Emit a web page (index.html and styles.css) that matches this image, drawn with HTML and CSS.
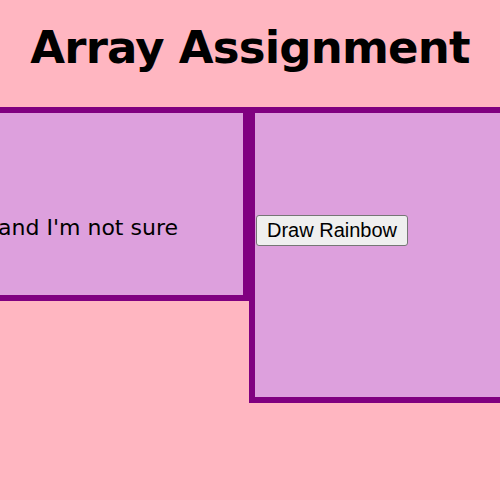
FILE: index.html
```html
<!DOCTYPE html>
<html>
<head>
<meta charset="utf-8">
<link rel="stylesheet" href="styles.css">
</head>
<body>
<h1 class="title">Array Assignment</h1>
<div class="row">
  <div class="panel panel-left">
    <p class="note">I have tried a lot of things and I'm not sure</p>
  </div>
  <div class="panel panel-right">
    <button class="draw-btn" type="button">Draw Rainbow</button>
  </div>
</div>
</body>
</html>
```
FILE: styles.css
```css
html, body {
  margin: 0;
  padding: 0;
}
body {
  background: #ffb6c1;
  font-family: "DejaVu Sans", sans-serif;
  color: #000;
  overflow: hidden;
  width: 500px;
  height: 500px;
}
.title {
  margin: 22px 0 33px;
  font-size: 45px;
  line-height: 52px;
  letter-spacing: -0.8px;
  font-weight: 700;
  text-align: center;
}
.row {
  display: flex;
  align-items: flex-start;
  margin-left: -200px;
}
.panel {
  background: #dda0dd;
  border: 6px solid #800080;
  flex: none;
  box-sizing: border-box;
}
.panel-left {
  width: 449px;
  height: 194px;
  padding: 102px 65px 0 0;
  display: flex;
  justify-content: flex-end;
  align-items: flex-start;
  overflow: hidden;
}
.note {
  flex: none;
  margin: 0;
  font-size: 22px;
  line-height: 26px;
  white-space: nowrap;
}
.panel-right {
  width: 320px;
  height: 296px;
  padding: 102px 0 0 1px;
}
.draw-btn {
  font-family: "Liberation Sans", Arial, sans-serif;
  font-size: 20px;
  line-height: 25px;
  padding: 2px 10px;
  background: #efefef;
  border: 1px solid #767676;
  border-radius: 3px;
  color: #000;
}
```
